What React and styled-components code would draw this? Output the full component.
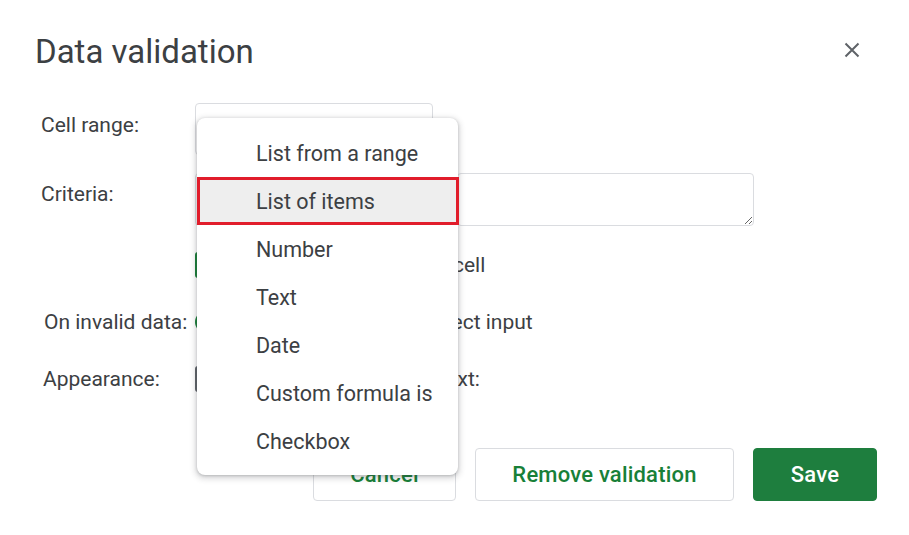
import styled, { createGlobalStyle } from 'styled-components'

const TEXT = '#3c4043'
const GREEN = '#188038'
const SAVE = '#1e7e3e'
const LINE = '#dadce0'

const Global = createGlobalStyle`
	body {
		margin: 0;
		background: #ffffff;
		font-family: Roboto, 'Liberation Sans', sans-serif;
		color: ${TEXT};
	}
`

const Dialog = styled.div`
	position: relative;
	width: 909px;
	height: 535px;
	box-sizing: border-box;
	padding: 32px 32px 0 35px;
	background: #ffffff;
	overflow: hidden;
`

const Header = styled.div`
	display: flex;
	align-items: center;
	justify-content: space-between;
	padding-right: 13px;
`
const Title = styled.h1`
	margin: 0;
	font-size: 33px;
	line-height: 40px;
	font-weight: 400;
	color: ${TEXT};
`
const Close = styled.button`
	display: flex;
	align-items: center;
	justify-content: center;
	width: 24px;
	height: 24px;
	margin-top: -4px;
	padding: 0;
	border: none;
	background: none;
`

const Form = styled.div`
	display: flex;
	flex-direction: column;
	margin: 31px 0 0 6px;
`
const Row = styled.div`
	display: grid;
	grid-template-columns: 154px 1fr;
	align-items: ${(p) => (p.$top ? 'start' : 'center')};
	margin-top: ${(p) => p.$gap || 0}px;
`
const Label = styled.div`
	font-size: 21px;
	line-height: 24px;
	padding-top: ${(p) => p.$pad || 0}px;
	padding-left: ${(p) => p.$shift || 0}px;
`
const Controls = styled.div`
	display: flex;
	align-items: center;
	gap: ${(p) => p.$gap || 12}px;
	font-size: 21px;
	line-height: 24px;
	white-space: nowrap;
`
const Option = styled.span`
	display: inline-flex;
	align-items: center;
	gap: 10px;
`

const RangeInput = styled.div`
	display: flex;
	align-items: center;
	justify-content: space-between;
	box-sizing: border-box;
	width: 238px;
	height: 52px;
	padding: 0 17px 0 14px;
	border: 1px solid ${LINE};
	border-radius: 4px;
	font-size: 19px;
`
const Select = styled.div`
	display: flex;
	align-items: center;
	justify-content: space-between;
	box-sizing: border-box;
	width: 242px;
	height: 53px;
	padding: 0 14px;
	border: 1px solid ${LINE};
	border-radius: 4px;
	font-size: 20px;
`
const Area = styled.textarea`
	box-sizing: border-box;
	width: 297px;
	height: 53px;
	border: 1px solid ${LINE};
	border-radius: 4px;
	font-family: inherit;
	font-size: 19px;
	outline: none;
`
const Check = styled.span`
	display: inline-flex;
	align-items: center;
	justify-content: center;
	flex: 0 0 auto;
	box-sizing: border-box;
	width: 26px;
	height: 26px;
	border-radius: 3px;
	background: ${(p) => (p.$on ? GREEN : '#ffffff')};
	border: 2px solid ${(p) => (p.$on ? GREEN : '#5f6368')};
`
const Radio = styled.span`
	display: inline-block;
	flex: 0 0 auto;
	box-sizing: border-box;
	width: 22px;
	height: 22px;
	border-radius: 50%;
	border: 2px solid ${(p) => (p.$on ? GREEN : '#5f6368')};
	box-shadow: ${(p) => (p.$on ? `inset 0 0 0 4px #fff, inset 0 0 0 10px ${GREEN}` : 'none')};
`

const Footer = styled.div`
	display: flex;
	justify-content: flex-end;
	gap: 19px;
	margin-top: 56px;
`
const Button = styled.button`
	box-sizing: border-box;
	width: ${(p) => p.$w}px;
	height: 53px;
	border-radius: 4px;
	border: 1px solid ${(p) => (p.$primary ? SAVE : LINE)};
	background: ${(p) => (p.$primary ? SAVE : '#ffffff')};
	color: ${(p) => (p.$primary ? '#ffffff' : GREEN)};
	font-family: inherit;
	font-size: 22px;
	font-weight: 500;
	letter-spacing: 0.2px;
`

const Menu = styled.ul`
	position: absolute;
	left: 197px;
	top: 118px;
	width: 261px;
	height: 357px;
	box-sizing: border-box;
	margin: 0;
	padding: 11px 0 0;
	list-style: none;
	background: #ffffff;
	border-radius: 8px;
	box-shadow: 0 1px 3px rgba(60, 64, 67, 0.3), 0 2px 5px 3px rgba(60, 64, 67, 0.13);
`
const MenuItem = styled.li`
	display: flex;
	align-items: center;
	height: 48px;
	padding-left: 59px;
	font-size: 21.5px;
	color: ${TEXT};
	white-space: nowrap;
	background: ${(p) => (p.$active ? '#eeeeee' : 'transparent')};
	box-shadow: ${(p) => (p.$active ? 'inset 0 0 0 3px #e11d2b' : 'none')};
	margin-right: ${(p) => (p.$active ? -1 : 0)}px;
`

const CloseIcon = () => (
	<svg width="16" height="16" viewBox="0 0 16 16">
		<path d="M1.5 1.5 L14.5 14.5 M14.5 1.5 L1.5 14.5" stroke="#5f6368" strokeWidth="2" />
	</svg>
)

const GridIcon = () => (
	<svg width="22" height="22" viewBox="0 0 22 22" fill="none" stroke="#5f6368" strokeWidth="2">
		<rect x="1" y="1" width="20" height="20" />
		<path d="M1 8 H21 M1 14 H21 M8 1 V21" />
	</svg>
)

const TickIcon = () => (
	<svg width="18" height="18" viewBox="0 0 18 18">
		<path d="M3 9.5 L7 13.5 L15 5" stroke="#fff" strokeWidth="2.4" fill="none" />
	</svg>
)

export default function App() {
	const criteria = [
		'List from a range',
		'List of items',
		'Number',
		'Text',
		'Date',
		'Custom formula is',
		'Checkbox',
	]
	return (
		<Dialog>
			<Global />
			<Header>
				<Title>Data validation</Title>
				<Close aria-label="Close">
					<CloseIcon />
				</Close>
			</Header>
			<Form>
				<Row $top>
					<Label $pad={10}>Cell range:</Label>
					<RangeInput>
						<span>Sheet1!A1</span>
						<GridIcon />
					</RangeInput>
				</Row>
				<Row $top $gap={18}>
					<Label $pad={9}>Criteria:</Label>
					<Controls $gap={20}>
						<Select>
							<span>List of items</span>
							<span>▾</span>
						</Select>
						<Area readOnly defaultValue="" />
					</Controls>
				</Row>
				<Row $gap={26}>
					<span />
					<Controls $gap={21}>
						<Check $on>
							<TickIcon />
						</Check>
						<span>Show dropdown list in cell</span>
					</Controls>
				</Row>
				<Row $gap={32}>
					<Label $shift={3}>On invalid data:</Label>
					<Controls $gap={32}>
						<Option>
							<Radio $on />
							Show warning
						</Option>
						<Option>
							<Radio />
							Reject input
						</Option>
					</Controls>
				</Row>
				<Row $gap={32}>
					<Label $shift={2}>Appearance:</Label>
					<Controls $gap={21}>
						<Check />
						<span>Show validation help text:</span>
					</Controls>
				</Row>
			</Form>
			<Footer>
				<Button $w={143}>Cancel</Button>
				<Button $w={259}>Remove validation</Button>
				<Button $w={124} $primary>
					Save
				</Button>
			</Footer>
			<Menu>
				{criteria.map((c) => (
					<MenuItem key={c} $active={c === 'List of items'}>
						{c}
					</MenuItem>
				))}
			</Menu>
		</Dialog>
	)
}
